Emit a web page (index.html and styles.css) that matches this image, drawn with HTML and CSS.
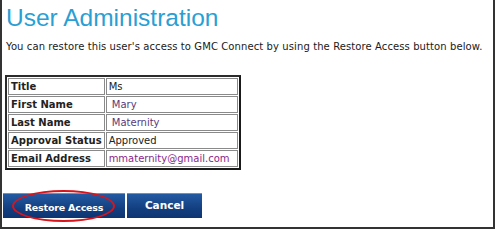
FILE: index.html
```html
<!DOCTYPE html>
<html lang="en">
<head>
  <meta charset="UTF-8" />
  <title>User Administration - GMC Connect</title>
  <link rel="stylesheet" href="styles.css">
</head>
<body>

  <div class="frame">
    <h1 class="page-title">User Administration</h1>
    <p class="intro">You can restore this user's access to GMC Connect by using the Restore Access button below.</p>

    <!-- User details -->
    <table class="user-table">
      <tr><th>Title</th><td class="val-plain">Ms</td></tr>
      <tr><th>First Name</th><td class="val-name">&nbsp;Mary</td></tr>
      <tr><th>Last Name</th><td class="val-name">&nbsp;Maternity</td></tr>
      <tr><th>Approval Status</th><td class="val-plain">Approved</td></tr>
      <tr><th>Email Address</th><td class="val-email">mmaternity@gmail.com</td></tr>
    </table>

    <!-- Actions -->
    <div class="actions">
      <button class="btn btn-restore">Restore Access<span class="circle"></span></button>
      <button class="btn btn-cancel">Cancel</button>
    </div>
  </div>

</body>
</html>
```

FILE: styles.css
```css
/* Global */
body {
  margin: 0;
  padding: 0;
  background-color: #ffffff;
  font-family: 'DejaVu Sans', Verdana, sans-serif;
}

.frame {
  width: 495px;
  height: 229px;
  box-sizing: border-box;
  border-left: 2px solid #333;
  border-right: 2px solid #333;
  border-bottom: 2px solid #333;
  padding: 0 0 0 4px;
}

.page-title {
  margin: 0;
  padding-top: 3px;
  font-family: 'Liberation Sans', Arial, sans-serif;
  font-weight: normal;
  font-size: 24.5px;
  line-height: 30px;
  color: #2a9fd4;
}

.intro {
  margin: 7px 0 0 0;
  font-size: 10px;
  letter-spacing: 0.1px;
  line-height: 14px;
  color: #1a1a1a;
}

/* Table */
.user-table {
  margin: 21px 0 0 -1px;
  border: 2px solid #2b2b2b;
  border-right-color: #1a1a1a;
  border-bottom-color: #1a1a1a;
  border-collapse: separate;
  border-spacing: 1px;
  font-size: 10px;
}

.user-table th,
.user-table td {
  border: 1px solid #8a8a8a;
  height: 15px;
  padding: 0 2px;
  text-align: left;
  white-space: nowrap;
}

.user-table th {
  width: 88px;
  color: #222;
}

.user-table td {
  width: 126px;
}

.val-plain { color: #222; }
.val-name { color: #5a3a78; }
.val-email { color: #8a1f8a; }

/* Buttons */
.actions {
  display: flex;
  gap: 2px;
  margin: 23px 0 0 -3px;
}

.btn {
  position: relative;
  height: 25px;
  border: none;
  border-top: 1px solid #6f8fc0;
  background: linear-gradient(#245aa3, #123f80 60%, #0e3571);
  color: #ffffff;
  font-family: 'DejaVu Sans', Verdana, sans-serif;
  font-weight: bold;
  padding: 0;
}

.btn-restore {
  width: 122px;
  padding-top: 3px;
  font-size: 9.5px;
  letter-spacing: -0.2px;
}

.btn-cancel {
  width: 75px;
  padding-bottom: 2px;
  font-size: 10.5px;
}

.circle {
  position: absolute;
  left: 9px;
  top: -4px;
  width: 99px;
  height: 28px;
  border: 2px solid #d8141c;
  border-radius: 50%;
}
```
